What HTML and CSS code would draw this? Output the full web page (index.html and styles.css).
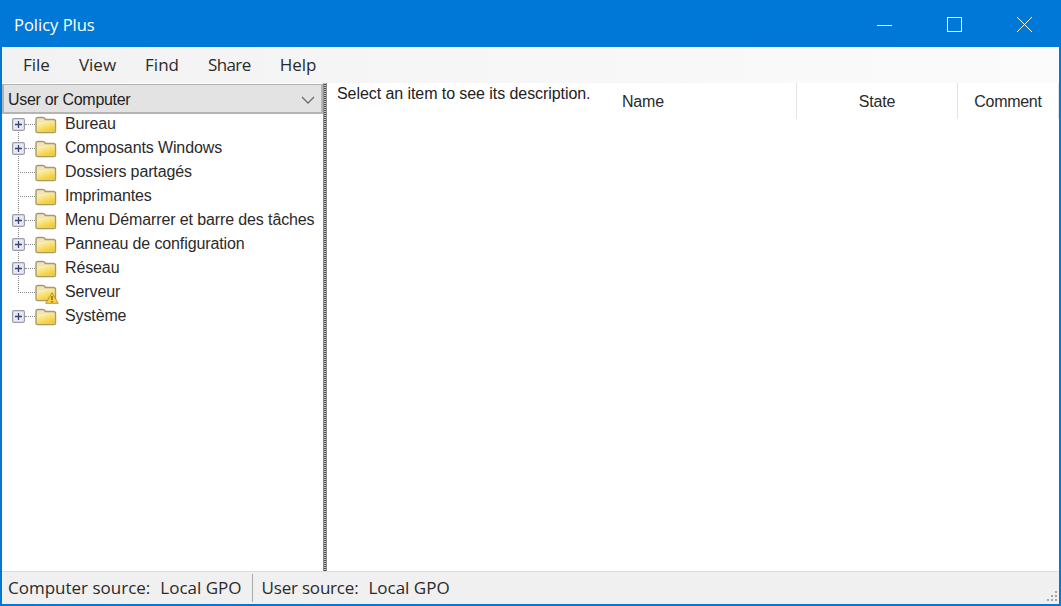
FILE: index.html
```html
<!DOCTYPE html>
<html lang="en">
<head>
<meta charset="utf-8">
<title>Policy Plus</title>
<link rel="stylesheet" href="styles.css">
</head>
<body>
<svg class="defs" width="0" height="0" aria-hidden="true">
  <defs>
    <linearGradient id="fold" x1="0" y1="0" x2="0.6" y2="1">
      <stop offset="0" stop-color="#fff7cc"/>
      <stop offset="0.45" stop-color="#fbe584"/>
      <stop offset="1" stop-color="#f0cb36"/>
    </linearGradient>
    <symbol id="folder" viewBox="0 0 22 18">
      <path d="M2.500 16.500Q1 16.500 1 15V3.500Q1 1.500 3 1.500H8Q9.500 1.500 10 3L10.500 3.500H18.500Q20.500 3.500 20.500 5.500V15Q20.500 16.500 19 16.500Z" fill="#efe5bd" stroke="#ab9862" stroke-width="1.400"/>
      <path d="M2.300 15.700V7.500Q2.300 6.500 3.300 6.500H9.500L11 5.200H18Q19.700 5.200 19.700 7V15.700Z" fill="url(#fold)"/>
    </symbol>
    <symbol id="plus" viewBox="0 0 13 13">
      <rect x=".6" y=".6" width="11.800" height="11.800" rx="1.500" fill="#e8eaf4" stroke="#9a9aa8" stroke-width="1.200"/>
      <path d="M3 6.500H10M6.500 3V10" stroke="#39407a" stroke-width="1.300" fill="none"/>
    </symbol>
  </defs>
</svg>
<div class="window">
  <header class="titlebar">
    <span class="app-title">Policy Plus</span>
    <div class="controls">
      <svg class="ctl" viewBox="0 0 70 46" aria-hidden="true"><path d="M27 24.500H42" stroke="#fff" fill="none"/></svg>
      <svg class="ctl" viewBox="0 0 70 46" aria-hidden="true"><rect x="27.500" y="16.500" width="14" height="14" stroke="#fff" fill="none"/></svg>
      <svg class="ctl" viewBox="0 0 70 46" aria-hidden="true"><path d="M27 16L42 31M42 16L27 31" stroke="#fff" fill="none"/></svg>
    </div>
  </header>
  <nav class="menubar">
    <span class="menu-item">File</span>
    <span class="menu-item">View</span>
    <span class="menu-item">Find</span>
    <span class="menu-item menu-tight">Share</span>
    <span class="menu-item">Help</span>
  </nav>
  <main class="main">
    <aside class="left">
      <div class="combo">
        <span>User or Computer</span>
        <svg class="chev" viewBox="0 0 14 8" aria-hidden="true"><path d="M1 1L7 7L13 1" fill="none" stroke="#6d6d6d" stroke-width="1.300"/></svg>
      </div>
      <ul class="tree">
        <li class="row"><svg class="exp" aria-hidden="true"><use href="#plus"/></svg><i class="dots short"></i><svg class="folder" aria-hidden="true"><use href="#folder"/></svg><span class="label">Bureau</span></li>
        <li class="row"><svg class="exp" aria-hidden="true"><use href="#plus"/></svg><i class="dots short"></i><svg class="folder" aria-hidden="true"><use href="#folder"/></svg><span class="label">Composants Windows</span></li>
        <li class="row"><i class="dots long"></i><svg class="folder" aria-hidden="true"><use href="#folder"/></svg><span class="label">Dossiers partagés</span></li>
        <li class="row"><i class="dots long"></i><svg class="folder" aria-hidden="true"><use href="#folder"/></svg><span class="label">Imprimantes</span></li>
        <li class="row"><svg class="exp" aria-hidden="true"><use href="#plus"/></svg><i class="dots short"></i><svg class="folder" aria-hidden="true"><use href="#folder"/></svg><span class="label">Menu Démarrer et barre des tâches</span></li>
        <li class="row"><svg class="exp" aria-hidden="true"><use href="#plus"/></svg><i class="dots short"></i><svg class="folder" aria-hidden="true"><use href="#folder"/></svg><span class="label">Panneau de configuration</span></li>
        <li class="row"><svg class="exp" aria-hidden="true"><use href="#plus"/></svg><i class="dots short"></i><svg class="folder" aria-hidden="true"><use href="#folder"/></svg><span class="label">Réseau</span></li>
        <li class="row"><i class="dots long"></i><span class="fold-wrap"><svg class="folder" aria-hidden="true"><use href="#folder"/></svg><svg class="warn" viewBox="0 0 14 12" aria-hidden="true"><path d="M7 .8L13.300 11.300H.7Z" fill="#f7cf4a" stroke="#b98f2a" stroke-width=".9"/><path d="M7 4V8M7 9V10.500" stroke="#6b5210" stroke-width="1.200"/></svg></span><span class="label">Serveur</span></li>
        <li class="row"><svg class="exp" aria-hidden="true"><use href="#plus"/></svg><i class="dots short"></i><svg class="folder" aria-hidden="true"><use href="#folder"/></svg><span class="label">Système</span></li>
      </ul>
    </aside>
    <div class="splitter"></div>
    <section class="right">
      <p class="desc">Select an item to see its description.</p>
      <div class="list-head">
        <span class="col col-name">Name</span>
        <span class="col col-state">State</span>
        <span class="col col-comment">Comment</span>
      </div>
    </section>
  </main>
  <footer class="status">
    <span class="stat">Computer source:</span>
    <span class="stat val">Local GPO</span>
    <i class="stat-sep"></i>
    <span class="stat stat-user">User source:</span>
    <span class="stat val">Local GPO</span>
    <svg class="grip" viewBox="0 0 14 14" aria-hidden="true"><path d="M11 2h2v2h-2zM7 6h2v2H7zM11 6h2v2h-2zM3 10h2v2H3zM7 10h2v2H7zM11 10h2v2h-2z" fill="#a5a5a5"/></svg>
  </footer>
</div>
</body>
</html>
```
FILE: styles.css
```css
* { box-sizing: border-box; }
html, body { margin: 0; height: 100%; overflow: hidden; }
body { font-family: "Liberation Sans", Arial, sans-serif; font-size: 16px; color: #222; background: #fff; }
.defs { position: absolute; }
.window { height: 606px; display: flex; flex-direction: column; border: 1px solid #0078d7; border-width: 1px 2px 2px 2px; background: #fff; }
.titlebar { flex: 0 0 46px; background: #0078d7; color: #fff; display: flex; align-items: center; justify-content: space-between; padding-left: 12px; }
.app-title { font-family: "Open Sans", sans-serif; font-size: 16.500px; }
.controls { display: flex; transform: translateX(1px); }
.ctl { width: 70px; height: 46px; display: block; }
.menubar { flex: 0 0 36px; display: flex; align-items: center; padding: 0 0 2px 21px; gap: 29px; background: linear-gradient(90deg, #f2f2f2, #f6f6f6 40%, #fbfbfb); font-family: "Open Sans", sans-serif; font-size: 17px; color: #2a2a2a; }
.menu-tight { letter-spacing: -.6px; }
.main { flex: 1; display: flex; min-height: 0; }
.left { width: 321px; display: flex; flex-direction: column; }
.combo { height: 30px; margin-top: 1px; background: #e3e3e3; border: 2px solid #b4b4b4; border-width: 1px 2px 2px 2px; display: flex; align-items: center; justify-content: space-between; padding: 2px 6px 0 4px; font-size: 16px; letter-spacing: -.3px; }
.chev { width: 14px; height: 8px; }
.tree { list-style: none; margin: -2px 0 0; padding: 0 0 0 10px; position: relative; flex: 1; }
.tree::before { content: ""; position: absolute; left: 16px; top: 14px; height: 165px; border-left: 1px dotted #8a8a8a; }
.row { height: 24px; display: flex; align-items: center; position: relative; }
.exp { width: 13px; height: 13px; flex: none; position: relative; }
.dots { display: block; flex: none; height: 0; border-top: 1px dotted #8a8a8a; }
.dots.short { width: 10px; }
.dots.long { width: 17px; margin-left: 6px; }
.folder { width: 22px; height: 18px; flex: none; display: block; position: relative; top: 1px; }
.fold-wrap { position: relative; display: block; flex: none; }
.warn { position: absolute; right: -2px; bottom: -3px; width: 14px; height: 12px; }
.label { margin-left: 8px; white-space: nowrap; letter-spacing: -.12px; color: #2a2a2a; }
.splitter { width: 4px; background: repeating-linear-gradient(0deg, #4a4a4a 0 1px, #c8c8c8 1px 2px); border-left: 1px solid #8c8c8c; border-right: 1px solid #8c8c8c; }
.right { flex: 1; display: flex; align-items: flex-start; position: relative; }
.desc { margin: 2px 0 0 10px; white-space: nowrap; letter-spacing: -.07px; color: #222; }
.list-head { margin-left: auto; height: 36px; display: flex; align-items: center; color: #2a2a2a; letter-spacing: -.2px; }
.col { display: flex; align-items: center; height: 100%; padding-top: 2px; }
.col-name { width: 175px; border-right: 1px solid #e3e3e3; }
.col-state { width: 161px; justify-content: center; border-right: 1px solid #e3e3e3; }
.col-comment { width: 101px; justify-content: center; border-right: 1px solid #e3e3e3; letter-spacing: -.3px; }
.status { flex: 0 0 33px; background: #f0f0f0; border-top: 1px solid #dcdcdc; display: flex; align-items: center; padding: 0 0 2px 6px; font-family: "Open Sans", sans-serif; font-size: 17px; color: #2a2a2a; position: relative; }
.stat { white-space: nowrap; }
.stat-user { letter-spacing: -.2px; }
.val { margin-left: 10px; }
.stat-sep { width: 1px; height: 28px; background: #a8a8a8; margin: 2px 9px 0 10px; }
.grip { position: absolute; right: 1px; bottom: 1px; width: 14px; height: 14px; }
```
